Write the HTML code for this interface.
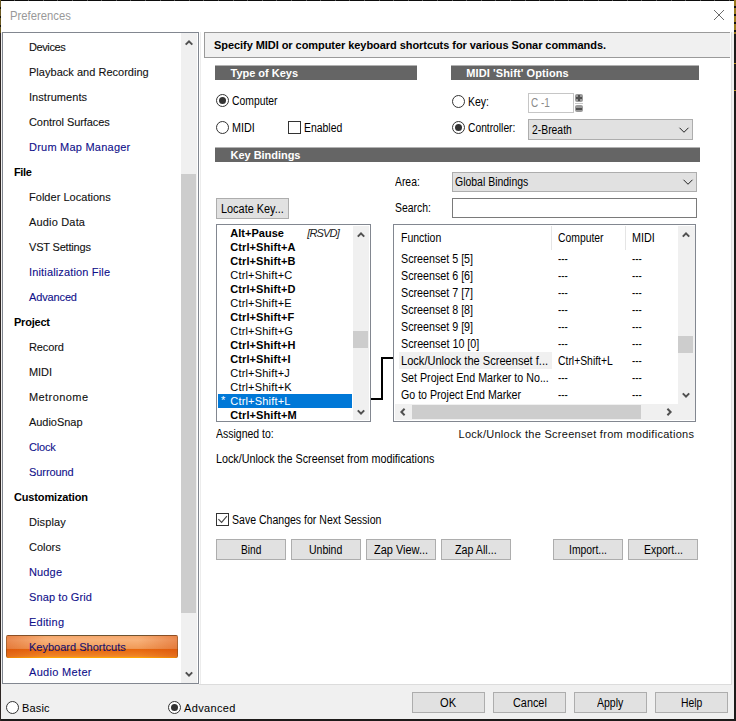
<!DOCTYPE html>
<html><head><meta charset="utf-8"><title>Preferences</title>
<style>
html,body{margin:0;padding:0;}
body{width:736px;height:721px;overflow:hidden;background:#1d1b1a;position:relative;font-family:"Liberation Sans",sans-serif;}
#w div,#w span,#w svg{position:absolute;display:block;}
#w span{white-space:pre;line-height:16px;}
</style></head><body><div id="w">
<div style="left:0;top:0;width:736px;height:1px;background:repeating-linear-gradient(90deg,#0c0c0c 0,#0c0c0c 13.6px,#5a5a5a 13.6px,#5a5a5a 14.6px)"></div>
<div style="left:0;top:0;width:1px;height:33px;background:repeating-linear-gradient(#6b5a22 0,#6b5a22 7px,#1a1508 7px,#1a1508 9px)"></div>
<div style="left:0;top:33px;width:1px;height:688px;background:#2e2624"></div>
<div style="left:734px;top:63px;width:2px;height:1px;background:#b8901c"></div><div style="left:734px;top:90px;width:2px;height:1px;background:#b8901c"></div>
<div style="left:734px;top:0;width:2px;height:34px;background:repeating-linear-gradient(#9a7a1e 0,#9a7a1e 6px,#111 6px,#111 8px)"></div>
<div style="left:1px;top:1px;width:733px;height:718px;background:#fff;"></div>
<div style="left:1px;top:32px;width:733px;height:687px;background:#f0f0f0;"></div>
<svg style="left:713px;top:9px" width="12" height="12" viewBox="0 0 12 12"><path d="M1 1 L11 11 M11 1 L1 11" stroke="#6a6a6a" stroke-width="1" fill="none"/></svg>
<div style="left:2px;top:32px;width:197px;height:652px;background:#fff;border:1px solid #828790;box-sizing:border-box;"></div>
<div style="left:181px;top:33px;width:16px;height:650px;background:#f0f0f0;"></div>
<div style="left:181px;top:174px;width:15px;height:439px;background:#cdcdcd;"></div>
<svg style="left:182.5px;top:37px" width="12" height="12" viewBox="0 0 12 12"><path d="M2.7 7.65 L6 4.35 L9.3 7.65" stroke="#505050" stroke-width="2" fill="none"/></svg>
<svg style="left:182.5px;top:668px" width="12" height="12" viewBox="0 0 12 12"><path d="M2.8 4.4 L6 7.6 L9.2 4.4" stroke="#505050" stroke-width="2" fill="none"/></svg>
<div style="left:6px;top:635px;width:172px;height:23px;border-radius:2px;box-shadow:inset 1px 0 0 rgba(110,70,30,0.5),inset -1px 0 0 rgba(110,70,30,0.5);background:linear-gradient(90deg,rgba(210,70,10,.38) 0,rgba(210,70,10,0) 40px,rgba(210,70,10,0) 132px,rgba(210,70,10,.38) 100%),linear-gradient(180deg,#6e5330 0,#6e5330 1px,#f5a76c 1px,#f8b27a 5px,#f19c5a 13px,#ee9450 14px,#e6650d 14px,#ee7f22 20px,#f28c2c 22px,#ffa700 22px,#ffa700 23px);"></div>
<svg style="left:6px;top:701px" width="13" height="13" viewBox="0 0 13 13"><circle cx="6.5" cy="6.5" r="6" fill="#fff" stroke="#333" stroke-width="1"/></svg>
<svg style="left:168px;top:701px" width="13" height="13" viewBox="0 0 13 13"><circle cx="6.5" cy="6.5" r="6" fill="#fff" stroke="#333" stroke-width="1"/><circle cx="6.5" cy="6.5" r="3.5" fill="#333"/></svg>
<div style="left:199px;top:32px;width:533px;height:653px;background:#fff;"></div>
<div style="left:731px;top:32px;width:1px;height:653px;background:#dcdcdc;"></div>
<div style="left:199px;top:684px;width:533px;height:1px;background:#dcdcdc;"></div>
<div style="left:200px;top:32px;width:1px;height:652px;background:#ececec;"></div>
<div style="left:204px;top:32px;width:526px;height:26px;background:#f0f0f0;border:1px solid #9a9a9a;border-right:none;box-sizing:border-box;"></div>
<div style="left:215px;top:65px;width:202px;height:1px;background:#b2b2b2;"></div>
<div style="left:215px;top:66px;width:202px;height:14px;background:#656565;"></div>
<div style="left:451px;top:65px;width:248px;height:1px;background:#b2b2b2;"></div>
<div style="left:451px;top:66px;width:248px;height:14px;background:#656565;"></div>
<div style="left:215px;top:147px;width:485px;height:1px;background:#b2b2b2;"></div>
<div style="left:215px;top:148px;width:485px;height:14px;background:#656565;"></div>
<svg style="left:216px;top:94px" width="13" height="13" viewBox="0 0 13 13"><circle cx="6.5" cy="6.5" r="6" fill="#fff" stroke="#333" stroke-width="1"/><circle cx="6.5" cy="6.5" r="3.5" fill="#333"/></svg>
<svg style="left:216px;top:121px" width="13" height="13" viewBox="0 0 13 13"><circle cx="6.5" cy="6.5" r="6" fill="#fff" stroke="#333" stroke-width="1"/></svg>
<svg style="left:288px;top:121px" width="13" height="13" viewBox="0 0 13 13"><rect x="0.5" y="0.5" width="12" height="12" fill="#fff" stroke="#333" stroke-width="1"/></svg>
<svg style="left:452px;top:95px" width="13" height="13" viewBox="0 0 13 13"><circle cx="6.5" cy="6.5" r="6" fill="#fff" stroke="#333" stroke-width="1"/></svg>
<svg style="left:452px;top:121px" width="13" height="13" viewBox="0 0 13 13"><circle cx="6.5" cy="6.5" r="6" fill="#fff" stroke="#333" stroke-width="1"/><circle cx="6.5" cy="6.5" r="3.5" fill="#333"/></svg>
<div style="left:528px;top:93px;width:46px;height:20px;background:#fff;border:1px solid #c6c6c6;box-sizing:border-box;"></div>
<div style="left:575px;top:94px;width:8px;height:8px;background:#9a9a9a;border-radius:2px;"></div>
<div style="left:575px;top:105px;width:8px;height:7px;background:#9a9a9a;border-radius:2px;"></div>
<div style="left:575px;top:103px;width:8px;height:1px;background:#c8c8c8;"></div>
<div style="left:576px;top:97px;width:6px;height:2px;background:#505050;"></div>
<div style="left:578px;top:95px;width:2px;height:6px;background:#505050;"></div>
<div style="left:576px;top:108px;width:6px;height:2px;background:#505050;"></div>
<div style="left:528px;top:119px;width:165px;height:21px;background:#e1e1e1;border:1px solid #adadad;box-sizing:border-box;"></div>
<svg style="left:678px;top:123.5px" width="12" height="12" viewBox="0 0 12 12"><path d="M1.5 3.75 L6 8.25 L10.5 3.75" stroke="#222" stroke-width="1.0" fill="none"/></svg>
<div style="left:452px;top:172px;width:245px;height:20px;background:#e1e1e1;border:1px solid #adadad;box-sizing:border-box;"></div>
<svg style="left:682px;top:176.0px" width="12" height="12" viewBox="0 0 12 12"><path d="M1.5 3.75 L6 8.25 L10.5 3.75" stroke="#222" stroke-width="1.0" fill="none"/></svg>
<div style="left:452px;top:198px;width:245px;height:20px;background:#fff;border:1px solid #7a7a7a;box-sizing:border-box;"></div>
<div style="left:216px;top:198px;width:73px;height:21px;background:#e1e1e1;border:1px solid #adadad;box-sizing:border-box;"></div>
<div style="left:216px;top:224px;width:155px;height:198px;background:#fff;border:1px solid #828790;box-sizing:border-box;"></div>
<div style="left:353px;top:226px;width:16px;height:194px;background:#f0f0f0;"></div>
<div style="left:353px;top:331px;width:15px;height:17px;background:#cdcdcd;"></div>
<svg style="left:355px;top:229px" width="12" height="12" viewBox="0 0 12 12"><path d="M2.8 7.6 L6 4.4 L9.2 7.6" stroke="#505050" stroke-width="2" fill="none"/></svg>
<svg style="left:355px;top:406px" width="12" height="12" viewBox="0 0 12 12"><path d="M2.8 4.4 L6 7.6 L9.2 4.4" stroke="#505050" stroke-width="2" fill="none"/></svg>
<div style="left:218px;top:394px;width:134px;height:14px;background:#0078d7;"></div>
<div style="left:371px;top:398px;width:12px;height:2px;background:#000;"></div>
<div style="left:381px;top:357px;width:2px;height:43px;background:#000;"></div>
<div style="left:381px;top:357px;width:13px;height:2px;background:#000;"></div>
<div style="left:393px;top:224px;width:303px;height:198px;background:#fff;border:1px solid #828790;box-sizing:border-box;"></div>
<div style="left:678px;top:226px;width:17px;height:194px;background:#f0f0f0;"></div>
<div style="left:678px;top:336px;width:15px;height:17px;background:#cdcdcd;"></div>
<div style="left:395px;top:404px;width:283px;height:16px;background:#f0f0f0;"></div>
<div style="left:412px;top:405px;width:229px;height:14px;background:#cdcdcd;"></div>
<svg style="left:679.6px;top:229px" width="12" height="12" viewBox="0 0 12 12"><path d="M2.8 7.6 L6 4.4 L9.2 7.6" stroke="#505050" stroke-width="2" fill="none"/></svg>
<svg style="left:679.6px;top:389px" width="12" height="12" viewBox="0 0 12 12"><path d="M2.8 4.4 L6 7.6 L9.2 4.4" stroke="#505050" stroke-width="2" fill="none"/></svg>
<svg style="left:397px;top:406px" width="12" height="12" viewBox="0 0 12 12"><path d="M7.6 2.8 L4.4 6 L7.6 9.2" stroke="#505050" stroke-width="2" fill="none"/></svg>
<svg style="left:662.8px;top:406px" width="12" height="12" viewBox="0 0 12 12"><path d="M4.4 2.8 L7.6 6 L4.4 9.2" stroke="#505050" stroke-width="2" fill="none"/></svg>
<div style="left:551px;top:226px;width:1px;height:24px;background:#e5e5e5;"></div>
<div style="left:625px;top:226px;width:1px;height:24px;background:#e5e5e5;"></div>
<div style="left:399px;top:352px;width:153px;height:17px;background:#f0f0f0;"></div>
<svg style="left:216px;top:513px" width="13" height="13" viewBox="0 0 13 13"><rect x="0.5" y="0.5" width="12" height="12" fill="#fff" stroke="#333" stroke-width="1"/><path d="M2.4 6.2 L5.6 9.4 L10.9 3.1" stroke="#444" stroke-width="1.1" fill="none"/></svg>
<div style="left:216px;top:539px;width:70px;height:21px;background:#e1e1e1;border:1px solid #adadad;box-sizing:border-box;"></div>
<div style="left:291px;top:539px;width:70px;height:21px;background:#e1e1e1;border:1px solid #adadad;box-sizing:border-box;"></div>
<div style="left:366px;top:539px;width:70px;height:21px;background:#e1e1e1;border:1px solid #adadad;box-sizing:border-box;"></div>
<div style="left:441px;top:539px;width:70px;height:21px;background:#e1e1e1;border:1px solid #adadad;box-sizing:border-box;"></div>
<div style="left:553px;top:539px;width:70px;height:21px;background:#e1e1e1;border:1px solid #adadad;box-sizing:border-box;"></div>
<div style="left:628px;top:539px;width:70px;height:21px;background:#e1e1e1;border:1px solid #adadad;box-sizing:border-box;"></div>
<div style="left:412px;top:692px;width:73px;height:21px;background:#e1e1e1;border:1px solid #adadad;box-sizing:border-box;"></div>
<div style="left:493px;top:692px;width:73px;height:21px;background:#e1e1e1;border:1px solid #adadad;box-sizing:border-box;"></div>
<div style="left:574px;top:692px;width:73px;height:21px;background:#e1e1e1;border:1px solid #adadad;box-sizing:border-box;"></div>
<div style="left:655px;top:692px;width:73px;height:21px;background:#e1e1e1;border:1px solid #adadad;box-sizing:border-box;"></div>
<span style="left:9.50px;top:8.00px;font-size:12px;color:#999;transform:scaleX(0.9397);transform-origin:0 50%;">Preferences</span>
<span style="left:29.00px;top:39.00px;font-size:11px;color:#111;letter-spacing:-0.396px;-webkit-text-stroke:0.1px #111;">Devices</span>
<span style="left:29.00px;top:64.00px;font-size:11px;color:#111;letter-spacing:0.024px;-webkit-text-stroke:0.1px #111;">Playback and Recording</span>
<span style="left:29.00px;top:89.00px;font-size:11px;color:#111;letter-spacing:0.053px;-webkit-text-stroke:0.1px #111;">Instruments</span>
<span style="left:29.00px;top:114.00px;font-size:11px;color:#111;letter-spacing:-0.079px;-webkit-text-stroke:0.1px #111;">Control Surfaces</span>
<span style="left:29.00px;top:139.00px;font-size:11px;color:#10108a;letter-spacing:0.228px;-webkit-text-stroke:0.1px #10108a;">Drum Map Manager</span>
<span style="left:14.00px;top:164.00px;font-size:11px;color:#000;letter-spacing:-0.401px;font-weight:bold;">File</span>
<span style="left:29.00px;top:189.00px;font-size:11px;color:#111;letter-spacing:0.028px;-webkit-text-stroke:0.1px #111;">Folder Locations</span>
<span style="left:29.00px;top:214.00px;font-size:11px;color:#111;letter-spacing:0.174px;-webkit-text-stroke:0.1px #111;">Audio Data</span>
<span style="left:29.00px;top:239.00px;font-size:11px;color:#111;letter-spacing:-0.182px;-webkit-text-stroke:0.1px #111;">VST Settings</span>
<span style="left:29.00px;top:264.00px;font-size:11px;color:#10108a;letter-spacing:0.152px;-webkit-text-stroke:0.1px #10108a;">Initialization File</span>
<span style="left:29.00px;top:289.00px;font-size:11px;color:#10108a;letter-spacing:-0.134px;-webkit-text-stroke:0.1px #10108a;">Advanced</span>
<span style="left:14.00px;top:314.00px;font-size:11px;color:#000;letter-spacing:-0.216px;font-weight:bold;">Project</span>
<span style="left:29.00px;top:339.00px;font-size:11px;color:#111;letter-spacing:-0.094px;-webkit-text-stroke:0.1px #111;">Record</span>
<span style="left:29.00px;top:364.00px;font-size:11px;color:#111;letter-spacing:-0.078px;-webkit-text-stroke:0.1px #111;">MIDI</span>
<span style="left:29.00px;top:389.00px;font-size:11px;color:#111;letter-spacing:0.420px;-webkit-text-stroke:0.1px #111;">Metronome</span>
<span style="left:29.00px;top:414.00px;font-size:11px;color:#111;letter-spacing:-0.041px;-webkit-text-stroke:0.1px #111;">AudioSnap</span>
<span style="left:29.00px;top:439.00px;font-size:11px;color:#10108a;letter-spacing:-0.191px;-webkit-text-stroke:0.1px #10108a;">Clock</span>
<span style="left:29.00px;top:464.00px;font-size:11px;color:#10108a;letter-spacing:-0.074px;-webkit-text-stroke:0.1px #10108a;">Surround</span>
<span style="left:14.00px;top:489.00px;font-size:11px;color:#000;letter-spacing:-0.148px;font-weight:bold;">Customization</span>
<span style="left:29.00px;top:514.00px;font-size:11px;color:#111;letter-spacing:0.112px;-webkit-text-stroke:0.1px #111;">Display</span>
<span style="left:29.00px;top:539.00px;font-size:11px;color:#111;letter-spacing:-0.009px;-webkit-text-stroke:0.1px #111;">Colors</span>
<span style="left:29.00px;top:564.00px;font-size:11px;color:#10108a;letter-spacing:0.145px;-webkit-text-stroke:0.1px #10108a;">Nudge</span>
<span style="left:29.00px;top:589.00px;font-size:11px;color:#10108a;letter-spacing:0.112px;-webkit-text-stroke:0.1px #10108a;">Snap to Grid</span>
<span style="left:29.00px;top:614.00px;font-size:11px;color:#10108a;letter-spacing:0.227px;-webkit-text-stroke:0.1px #10108a;">Editing</span>
<span style="left:29.00px;top:639.00px;font-size:11px;color:#14106c;letter-spacing:0.007px;-webkit-text-stroke:0.1px #14106c;">Keyboard Shortcuts</span>
<span style="left:29.00px;top:664.00px;font-size:11px;color:#10108a;letter-spacing:0.319px;-webkit-text-stroke:0.1px #10108a;">Audio Meter</span>
<span style="left:22.00px;top:700.00px;font-size:11px;color:#000;letter-spacing:0.148px;">Basic</span>
<span style="left:184.00px;top:700.00px;font-size:11px;color:#000;letter-spacing:0.350px;">Advanced</span>
<span style="left:214.00px;top:37.00px;font-size:11px;color:#000;letter-spacing:-0.058px;font-weight:bold;">Specify MIDI or computer keyboard shortcuts for various Sonar commands.</span>
<span style="left:230.50px;top:65.00px;font-size:11px;color:#fff;letter-spacing:-0.014px;font-weight:bold;">Type of Keys</span>
<span style="left:466.25px;top:65.00px;font-size:11px;color:#fff;letter-spacing:0.102px;font-weight:bold;">MIDI 'Shift' Options</span>
<span style="left:230.50px;top:147.00px;font-size:11px;color:#fff;letter-spacing:-0.027px;font-weight:bold;">Key Bindings</span>
<span style="left:231.50px;top:93.00px;font-size:12px;color:#000;transform:scaleX(0.8645);transform-origin:0 50%;">Computer</span>
<span style="left:232.00px;top:120.00px;font-size:12px;color:#000;transform:scaleX(0.8996);transform-origin:0 50%;">MIDI</span>
<span style="left:304.00px;top:120.00px;font-size:12px;color:#000;transform:scaleX(0.8695);transform-origin:0 50%;">Enabled</span>
<span style="left:467.75px;top:94.00px;font-size:12px;color:#000;transform:scaleX(0.8765);transform-origin:0 50%;">Key:</span>
<span style="left:467.50px;top:120.00px;font-size:12px;color:#000;transform:scaleX(0.8562);transform-origin:0 50%;">Controller:</span>
<span style="left:530.50px;top:95.00px;font-size:12px;color:#8a8a8a;transform:scaleX(0.8292);transform-origin:0 50%;">C -1</span>
<span style="left:531.50px;top:122.00px;font-size:12px;color:#000;transform:scaleX(0.8646);transform-origin:0 50%;">2-Breath</span>
<span style="left:455.00px;top:174.00px;font-size:12px;color:#000;transform:scaleX(0.8720);transform-origin:0 50%;">Global Bindings</span>
<span style="left:395.00px;top:174.00px;font-size:12px;color:#000;transform:scaleX(0.8645);transform-origin:0 50%;">Area:</span>
<span style="left:395.00px;top:200.00px;font-size:12px;color:#000;transform:scaleX(0.8656);transform-origin:0 50%;">Search:</span>
<span style="left:220.60px;top:201.00px;font-size:12px;color:#000;transform:scaleX(0.9081);transform-origin:0 50%;">Locate Key...</span>
<span style="left:230.25px;top:225.00px;font-size:11px;color:#000;letter-spacing:0.030px;font-weight:bold;">Alt+Pause</span>
<span style="left:230.25px;top:239.00px;font-size:11px;color:#000;letter-spacing:0.095px;font-weight:bold;">Ctrl+Shift+A</span>
<span style="left:230.25px;top:253.00px;font-size:11px;color:#000;letter-spacing:0.095px;font-weight:bold;">Ctrl+Shift+B</span>
<span style="left:230.25px;top:267.00px;font-size:11px;color:#000;letter-spacing:0.190px;">Ctrl+Shift+C</span>
<span style="left:230.25px;top:281.00px;font-size:11px;color:#000;letter-spacing:0.095px;font-weight:bold;">Ctrl+Shift+D</span>
<span style="left:230.25px;top:295.00px;font-size:11px;color:#000;letter-spacing:0.190px;">Ctrl+Shift+E</span>
<span style="left:230.25px;top:309.00px;font-size:11px;color:#000;letter-spacing:0.095px;font-weight:bold;">Ctrl+Shift+F</span>
<span style="left:230.25px;top:323.00px;font-size:11px;color:#000;letter-spacing:0.190px;">Ctrl+Shift+G</span>
<span style="left:230.25px;top:337.00px;font-size:11px;color:#000;letter-spacing:0.095px;font-weight:bold;">Ctrl+Shift+H</span>
<span style="left:230.25px;top:351.00px;font-size:11px;color:#000;letter-spacing:0.095px;font-weight:bold;">Ctrl+Shift+I</span>
<span style="left:230.25px;top:365.00px;font-size:11px;color:#000;letter-spacing:0.190px;">Ctrl+Shift+J</span>
<span style="left:230.25px;top:379.00px;font-size:11px;color:#000;letter-spacing:0.190px;">Ctrl+Shift+K</span>
<span style="left:230.25px;top:393.00px;font-size:11px;color:#fff;letter-spacing:0.190px;">Ctrl+Shift+L</span>
<span style="left:230.25px;top:407.00px;font-size:11px;color:#000;letter-spacing:0.095px;font-weight:bold;">Ctrl+Shift+M</span>
<span style="left:307.25px;top:225.00px;font-size:11px;color:#222;letter-spacing:-0.838px;font-style:italic;">[RSVD]</span>
<span style="left:221.00px;top:392.00px;font-size:11px;color:#fff;">*</span>
<span style="left:401.25px;top:230.00px;font-size:12px;color:#000;transform:scaleX(0.8755);transform-origin:0 50%;">Function</span>
<span style="left:557.50px;top:230.00px;font-size:12px;color:#000;transform:scaleX(0.8645);transform-origin:0 50%;">Computer</span>
<span style="left:632.00px;top:230.00px;font-size:12px;color:#000;transform:scaleX(0.8996);transform-origin:0 50%;">MIDI</span>
<span style="left:400.75px;top:251.00px;font-size:12px;color:#000;transform:scaleX(0.8926);transform-origin:0 50%;">Screenset 5 [5]</span>
<span style="left:558.00px;top:251.00px;font-size:12px;color:#000;transform:scaleX(0.8167);transform-origin:0 50%;">---</span>
<span style="left:632.00px;top:251.00px;font-size:12px;color:#000;transform:scaleX(0.8167);transform-origin:0 50%;">---</span>
<span style="left:400.75px;top:268.00px;font-size:12px;color:#000;transform:scaleX(0.8926);transform-origin:0 50%;">Screenset 6 [6]</span>
<span style="left:558.00px;top:268.00px;font-size:12px;color:#000;transform:scaleX(0.8167);transform-origin:0 50%;">---</span>
<span style="left:632.00px;top:268.00px;font-size:12px;color:#000;transform:scaleX(0.8167);transform-origin:0 50%;">---</span>
<span style="left:400.75px;top:285.00px;font-size:12px;color:#000;transform:scaleX(0.8926);transform-origin:0 50%;">Screenset 7 [7]</span>
<span style="left:558.00px;top:285.00px;font-size:12px;color:#000;transform:scaleX(0.8167);transform-origin:0 50%;">---</span>
<span style="left:632.00px;top:285.00px;font-size:12px;color:#000;transform:scaleX(0.8167);transform-origin:0 50%;">---</span>
<span style="left:400.75px;top:302.00px;font-size:12px;color:#000;transform:scaleX(0.8926);transform-origin:0 50%;">Screenset 8 [8]</span>
<span style="left:558.00px;top:302.00px;font-size:12px;color:#000;transform:scaleX(0.8167);transform-origin:0 50%;">---</span>
<span style="left:632.00px;top:302.00px;font-size:12px;color:#000;transform:scaleX(0.8167);transform-origin:0 50%;">---</span>
<span style="left:400.75px;top:319.00px;font-size:12px;color:#000;transform:scaleX(0.8926);transform-origin:0 50%;">Screenset 9 [9]</span>
<span style="left:558.00px;top:319.00px;font-size:12px;color:#000;transform:scaleX(0.8167);transform-origin:0 50%;">---</span>
<span style="left:632.00px;top:319.00px;font-size:12px;color:#000;transform:scaleX(0.8167);transform-origin:0 50%;">---</span>
<span style="left:400.75px;top:336.00px;font-size:12px;color:#000;transform:scaleX(0.8960);transform-origin:0 50%;">Screenset 10 [0]</span>
<span style="left:558.00px;top:336.00px;font-size:12px;color:#000;transform:scaleX(0.8167);transform-origin:0 50%;">---</span>
<span style="left:632.00px;top:336.00px;font-size:12px;color:#000;transform:scaleX(0.8167);transform-origin:0 50%;">---</span>
<span style="left:400.75px;top:353.00px;font-size:12px;color:#000;transform:scaleX(0.9224);transform-origin:0 50%;">Lock/Unlock the Screenset f...</span>
<span style="left:558.00px;top:353.00px;font-size:12px;color:#000;transform:scaleX(0.8647);transform-origin:0 50%;">Ctrl+Shift+L</span>
<span style="left:632.00px;top:353.00px;font-size:12px;color:#000;transform:scaleX(0.8167);transform-origin:0 50%;">---</span>
<span style="left:400.75px;top:370.00px;font-size:12px;color:#000;transform:scaleX(0.8899);transform-origin:0 50%;">Set Project End Marker to No...</span>
<span style="left:558.00px;top:370.00px;font-size:12px;color:#000;transform:scaleX(0.8167);transform-origin:0 50%;">---</span>
<span style="left:632.00px;top:370.00px;font-size:12px;color:#000;transform:scaleX(0.8167);transform-origin:0 50%;">---</span>
<span style="left:400.75px;top:387.00px;font-size:12px;color:#000;transform:scaleX(0.8867);transform-origin:0 50%;">Go to Project End Marker</span>
<span style="left:558.00px;top:387.00px;font-size:12px;color:#000;transform:scaleX(0.8167);transform-origin:0 50%;">---</span>
<span style="left:632.00px;top:387.00px;font-size:12px;color:#000;transform:scaleX(0.8167);transform-origin:0 50%;">---</span>
<span style="left:216.10px;top:426.00px;font-size:12px;color:#000;transform:scaleX(0.8736);transform-origin:0 50%;">Assigned to:</span>
<span style="left:458.50px;top:426.00px;font-size:11px;color:#111;letter-spacing:0.287px;">Lock/Unlock the Screenset from modifications</span>
<span style="left:216.10px;top:451.00px;font-size:12px;color:#000;transform:scaleX(0.8967);transform-origin:0 50%;">Lock/Unlock the Screenset from modifications</span>
<span style="left:232.10px;top:512.00px;font-size:12px;color:#000;transform:scaleX(0.8783);transform-origin:0 50%;">Save Changes for Next Session</span>
<span style="left:240.85px;top:542.00px;font-size:12px;color:#000;transform:scaleX(0.8447);transform-origin:0 50%;">Bind</span>
<span style="left:309.35px;top:542.00px;font-size:12px;color:#000;transform:scaleX(0.8756);transform-origin:0 50%;">Unbind</span>
<span style="left:373.95px;top:542.00px;font-size:12px;color:#000;transform:scaleX(0.9145);transform-origin:0 50%;">Zap View...</span>
<span style="left:455.20px;top:542.00px;font-size:12px;color:#000;transform:scaleX(0.8910);transform-origin:0 50%;">Zap All...</span>
<span style="left:569.00px;top:542.00px;font-size:12px;color:#000;transform:scaleX(0.8633);transform-origin:0 50%;">Import...</span>
<span style="left:643.50px;top:542.00px;font-size:12px;color:#000;transform:scaleX(0.8727);transform-origin:0 50%;">Export...</span>
<span style="left:440.48px;top:695.00px;font-size:12px;color:#000;transform:scaleX(0.9254);transform-origin:0 50%;">OK</span>
<span style="left:512.60px;top:695.00px;font-size:12px;color:#000;transform:scaleX(0.9047);transform-origin:0 50%;">Cancel</span>
<span style="left:597.35px;top:695.00px;font-size:12px;color:#000;transform:scaleX(0.8758);transform-origin:0 50%;">Apply</span>
<span style="left:680.85px;top:695.00px;font-size:12px;color:#000;transform:scaleX(0.8628);transform-origin:0 50%;">Help</span>
</div></body></html>
